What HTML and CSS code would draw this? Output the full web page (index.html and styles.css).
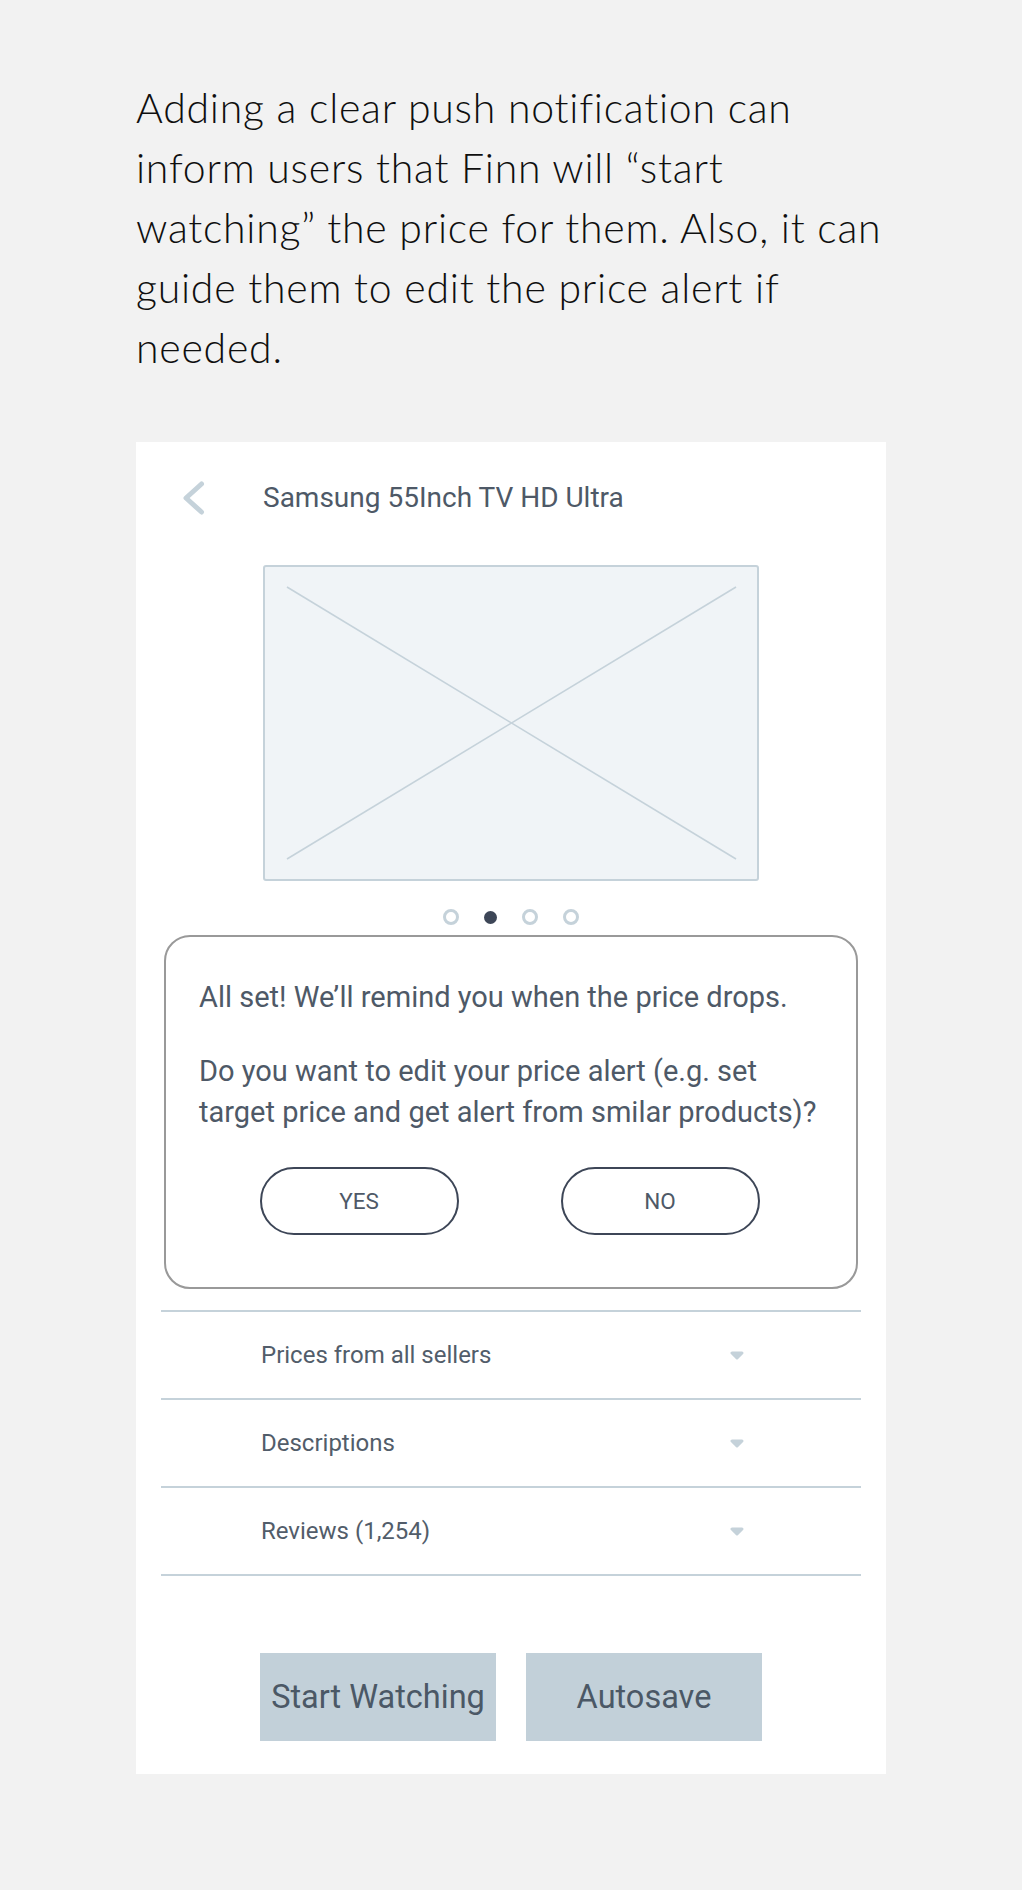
FILE: index.html
```html
<!DOCTYPE html>
<html lang="en">
<head>
<meta charset="utf-8">
<title>Price alert push notification</title>
<link rel="stylesheet" href="styles.css">
</head>
<body>
<main class="page">
  <p class="intro">Adding a clear push notification can inform users that Finn will “start watching” the price for them. Also, it can guide them to edit the price alert if needed.</p>

  <section class="card">
    <header class="bar">
      <svg class="back" width="24" height="36" viewBox="0 0 24 36" aria-hidden="true">
        <polyline points="19.5,4 4,18 19.5,32" fill="none" stroke="#c5d2da" stroke-width="5" stroke-linecap="round" stroke-linejoin="round"/>
      </svg>
      <h1 class="title">Samsung 55Inch TV HD Ultra</h1>
    </header>

    <div class="photo">
      <svg class="cross" width="492" height="312" viewBox="0 0 492 312" aria-hidden="true">
        <line x1="22" y1="20" x2="471" y2="292" stroke="#c5d2da" stroke-width="1.6"/>
        <line x1="471" y1="20" x2="22" y2="292" stroke="#c5d2da" stroke-width="1.6"/>
      </svg>
    </div>

    <div class="dots">
      <span class="dot"></span>
      <span class="dot active"></span>
      <span class="dot"></span>
      <span class="dot"></span>
    </div>

    <div class="dialog">
      <p class="msg">All set! We’ll remind you when the price drops.</p>
      <p class="msg second">Do you want to edit your price alert (e.g. set target price and get alert from smilar products)?</p>
      <div class="choices">
        <button class="pill">YES</button>
        <button class="pill">NO</button>
      </div>
    </div>

    <ul class="rows">
      <li class="row"><span>Prices from all sellers</span><svg class="caret" width="14" height="9" viewBox="0 0 14 9"><polygon points="2,2 12,2 7,7" fill="#c5d2da" stroke="#c5d2da" stroke-width="3" stroke-linejoin="round"/></svg></li>
      <li class="row"><span>Descriptions</span><svg class="caret" width="14" height="9" viewBox="0 0 14 9"><polygon points="2,2 12,2 7,7" fill="#c5d2da" stroke="#c5d2da" stroke-width="3" stroke-linejoin="round"/></svg></li>
      <li class="row"><span>Reviews (1,254)</span><svg class="caret" width="14" height="9" viewBox="0 0 14 9"><polygon points="2,2 12,2 7,7" fill="#c5d2da" stroke="#c5d2da" stroke-width="3" stroke-linejoin="round"/></svg></li>
    </ul>

    <div class="actions">
      <button class="action">Start Watching</button>
      <button class="action">Autosave</button>
    </div>
  </section>
</main>
</body>
</html>
```
FILE: styles.css
```css
* { box-sizing: border-box; }

html, body {
  margin: 0;
  padding: 0;
  background: #f2f2f2;
}

.page {
  width: 750px;
  margin: 0 auto;
  padding-top: 78px;
  padding-bottom: 115px;
}

.intro {
  max-width: 746px;
  margin: 0 0 64px 0;
  font-family: "Lato", "Liberation Sans", sans-serif;
  font-weight: 300;
  font-size: 41px;
  line-height: 60px;
  color: #0f0f0f;
  letter-spacing: 0.75px;
}

.card {
  background: #ffffff;
  padding: 36px 0 33px 0;
  font-family: "Roboto", "Liberation Sans", sans-serif;
  color: #4e5967;
}

.bar {
  display: flex;
  align-items: center;
  height: 40px;
}

.back {
  margin-left: 46px;
  flex: none;
}

.title {
  margin: 0 0 0 57px;
  font-size: 28px;
  font-weight: 400;
  line-height: 40px;
  color: #4e5967;
}

.photo {
  width: 496px;
  height: 316px;
  margin: 47px auto 0 auto;
  border: 2px solid #c5d2da;
  border-radius: 3px;
  background: #f0f4f7;
}

.cross { display: block; }

.dots {
  display: flex;
  justify-content: center;
  align-items: center;
  gap: 25px;
  margin-top: 28px;
  height: 16px;
}

.dot {
  width: 16px;
  height: 16px;
  border-radius: 50%;
  border: 3.5px solid #c5d2da;
}

.dot.active {
  width: 13px;
  height: 13px;
  border: none;
  background: #3d4657;
}

.dialog {
  width: 694px;
  margin: 10px auto 0 auto;
  border: 2px solid #999999;
  border-radius: 26px;
  padding: 40px 36px 52px 33px;
}

.msg {
  margin: 0;
  font-size: 29px;
  line-height: 41px;
  color: #4e5967;
}

.msg.second { margin-top: 33px; }

.choices {
  display: flex;
  justify-content: space-between;
  width: 500px;
  margin: 34px auto 0 auto;
}

.pill {
  width: 199px;
  height: 68px;
  border: 2px solid #3d4657;
  border-radius: 34px;
  background: #ffffff;
  font-family: "Roboto", "Liberation Sans", sans-serif;
  font-size: 22.5px;
  color: #4e5967;
  padding: 0;
}

.rows {
  list-style: none;
  width: 700px;
  margin: 21px auto 0 auto;
  padding: 0;
  border-bottom: 2px solid #c5d2da;
}

.row {
  display: flex;
  align-items: center;
  justify-content: space-between;
  height: 88px;
  border-top: 2px solid #c5d2da;
  padding: 0 117px 0 100px;
  font-size: 24px;
  color: #525d6a;
}

.caret { display: block; }

.actions {
  display: flex;
  justify-content: center;
  gap: 30px;
  margin-top: 77px;
}

.action {
  width: 236px;
  height: 88px;
  border: none;
  background: #c2d0d9;
  font-family: "Roboto", "Liberation Sans", sans-serif;
  font-size: 32.5px;
  color: #4b5866;
  padding: 0;
}
```
